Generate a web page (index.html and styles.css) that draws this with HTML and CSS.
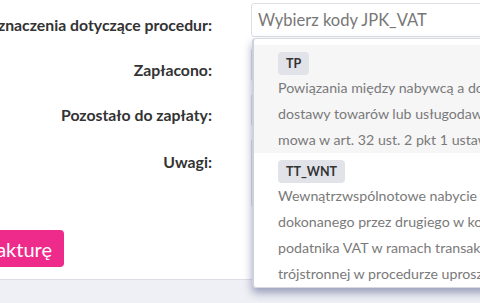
FILE: index.html
```html
<!DOCTYPE html>
<html>
  <head>
    <meta charset="utf-8" />
    <title>Faktura - kody JPK_VAT</title>
    <link rel="stylesheet" href="styles.css">
  </head>
  <body>
    <div class="card">
      <div class="form">
        <div class="row">
          <div class="label"><span>Oznaczenia dotyczące procedur:</span></div>
          <div class="field">
            <div class="select">Wybierz kody JPK_VAT</div>
            <div class="dropdown">
              <div class="option active">
                <span class="badge">TP</span>
                <p class="desc">Powiązania między nabywcą a dokonującym<br>dostawy towarów lub usługodawcą, o których<br>mowa w art. 32 ust. 2 pkt 1 ustawy</p>
              </div>
              <div class="option">
                <span class="badge">TT_WNT</span>
                <p class="desc">Wewnątrzwspólnotowe nabycie towarów<br>dokonanego przez drugiego w kolejności<br>podatnika VAT w ramach transakcji<br>trójstronnej w procedurze uproszczonej</p>
              </div>
            </div>
          </div>
        </div>
        <div class="row">
          <div class="label"><span>Zapłacono:</span></div>
          <div class="field"><div class="input"></div></div>
        </div>
        <div class="row">
          <div class="label"><span>Pozostało do zapłaty:</span></div>
          <div class="field"><div class="input"></div></div>
        </div>
        <div class="row">
          <div class="label"><span>Uwagi:</span></div>
          <div class="field"><div class="textarea"></div></div>
        </div>
      </div>
      <div class="actions">
        <button class="btn">Zapisz fakturę</button>
      </div>
    </div>
  </body>
</html>
```

FILE: styles.css
```css
html,
body {
  margin: 0;
  padding: 0;
  height: 100%;
  overflow: hidden;
}

body {
  background-color: #eef0f5;
  font-family: "Lato", "Liberation Sans", sans-serif;
  color: #333;
}

.card {
  background-color: #fff;
  height: 280px;
  border-bottom: 1px solid #dcdee6;
  padding-top: 3px;
  box-sizing: border-box;
}

.row {
  display: grid;
  grid-template-columns: 212px 1fr;
  column-gap: 39px;
  height: 45px;
}

.row:last-child .label {
  padding-top: 14px;
}

.label {
  display: flex;
  justify-content: flex-end;
  padding-top: 12px;
  font-size: 15.8px;
  font-weight: 700;
  line-height: 20px;
  white-space: nowrap;
}

.field {
  position: relative;
}

.select,
.input,
.textarea {
  height: 34px;
  border: 1px solid #dddfe4;
  border-radius: 3px;
  box-sizing: border-box;
  width: 260px;
}

.select {
  padding-left: 6px;
  font-size: 16.5px;
  line-height: 32px;
  color: #777;
  white-space: nowrap;
}

.textarea {
  height: 70px;
}

.dropdown {
  position: absolute;
  top: 35px;
  left: 1px;
  width: 300px;
  padding-top: 6px;
  height: 250px;
  box-sizing: border-box;
  background-color: #fff;
  border: 1px solid #d6d8e3;
  border-left: 2px solid #cdd0de;
  border-radius: 4px;
  box-shadow: 0 5px 8px rgba(55, 60, 115, 0.45);
  z-index: 2;
}

.option {
  padding: 7px 0 0 24px;
}

.option.active {
  background-color: #f6f6f7;
}

.badge {
  display: inline-block;
  height: 23px;
  line-height: 23px;
  padding: 0 8px;
  border-radius: 4px;
  background-color: #e2e3e9;
  font-size: 12.5px;
  font-weight: 700;
  color: #333;
}

.desc {
  margin: 0;
  font-size: 14.2px;
  line-height: 26px;
  color: #7a7a7a;
  white-space: nowrap;
}

.actions {
  width: 64px;
  display: flex;
  justify-content: flex-end;
  margin-top: 47px;
}

.btn {
  flex-shrink: 0;
  height: 37px;
  padding: 0 12px;
  border: 0;
  border-radius: 4px;
  background-color: #ee2a8b;
  color: #fff;
  font-family: inherit;
  font-size: 20px;
  white-space: nowrap;
}
```
